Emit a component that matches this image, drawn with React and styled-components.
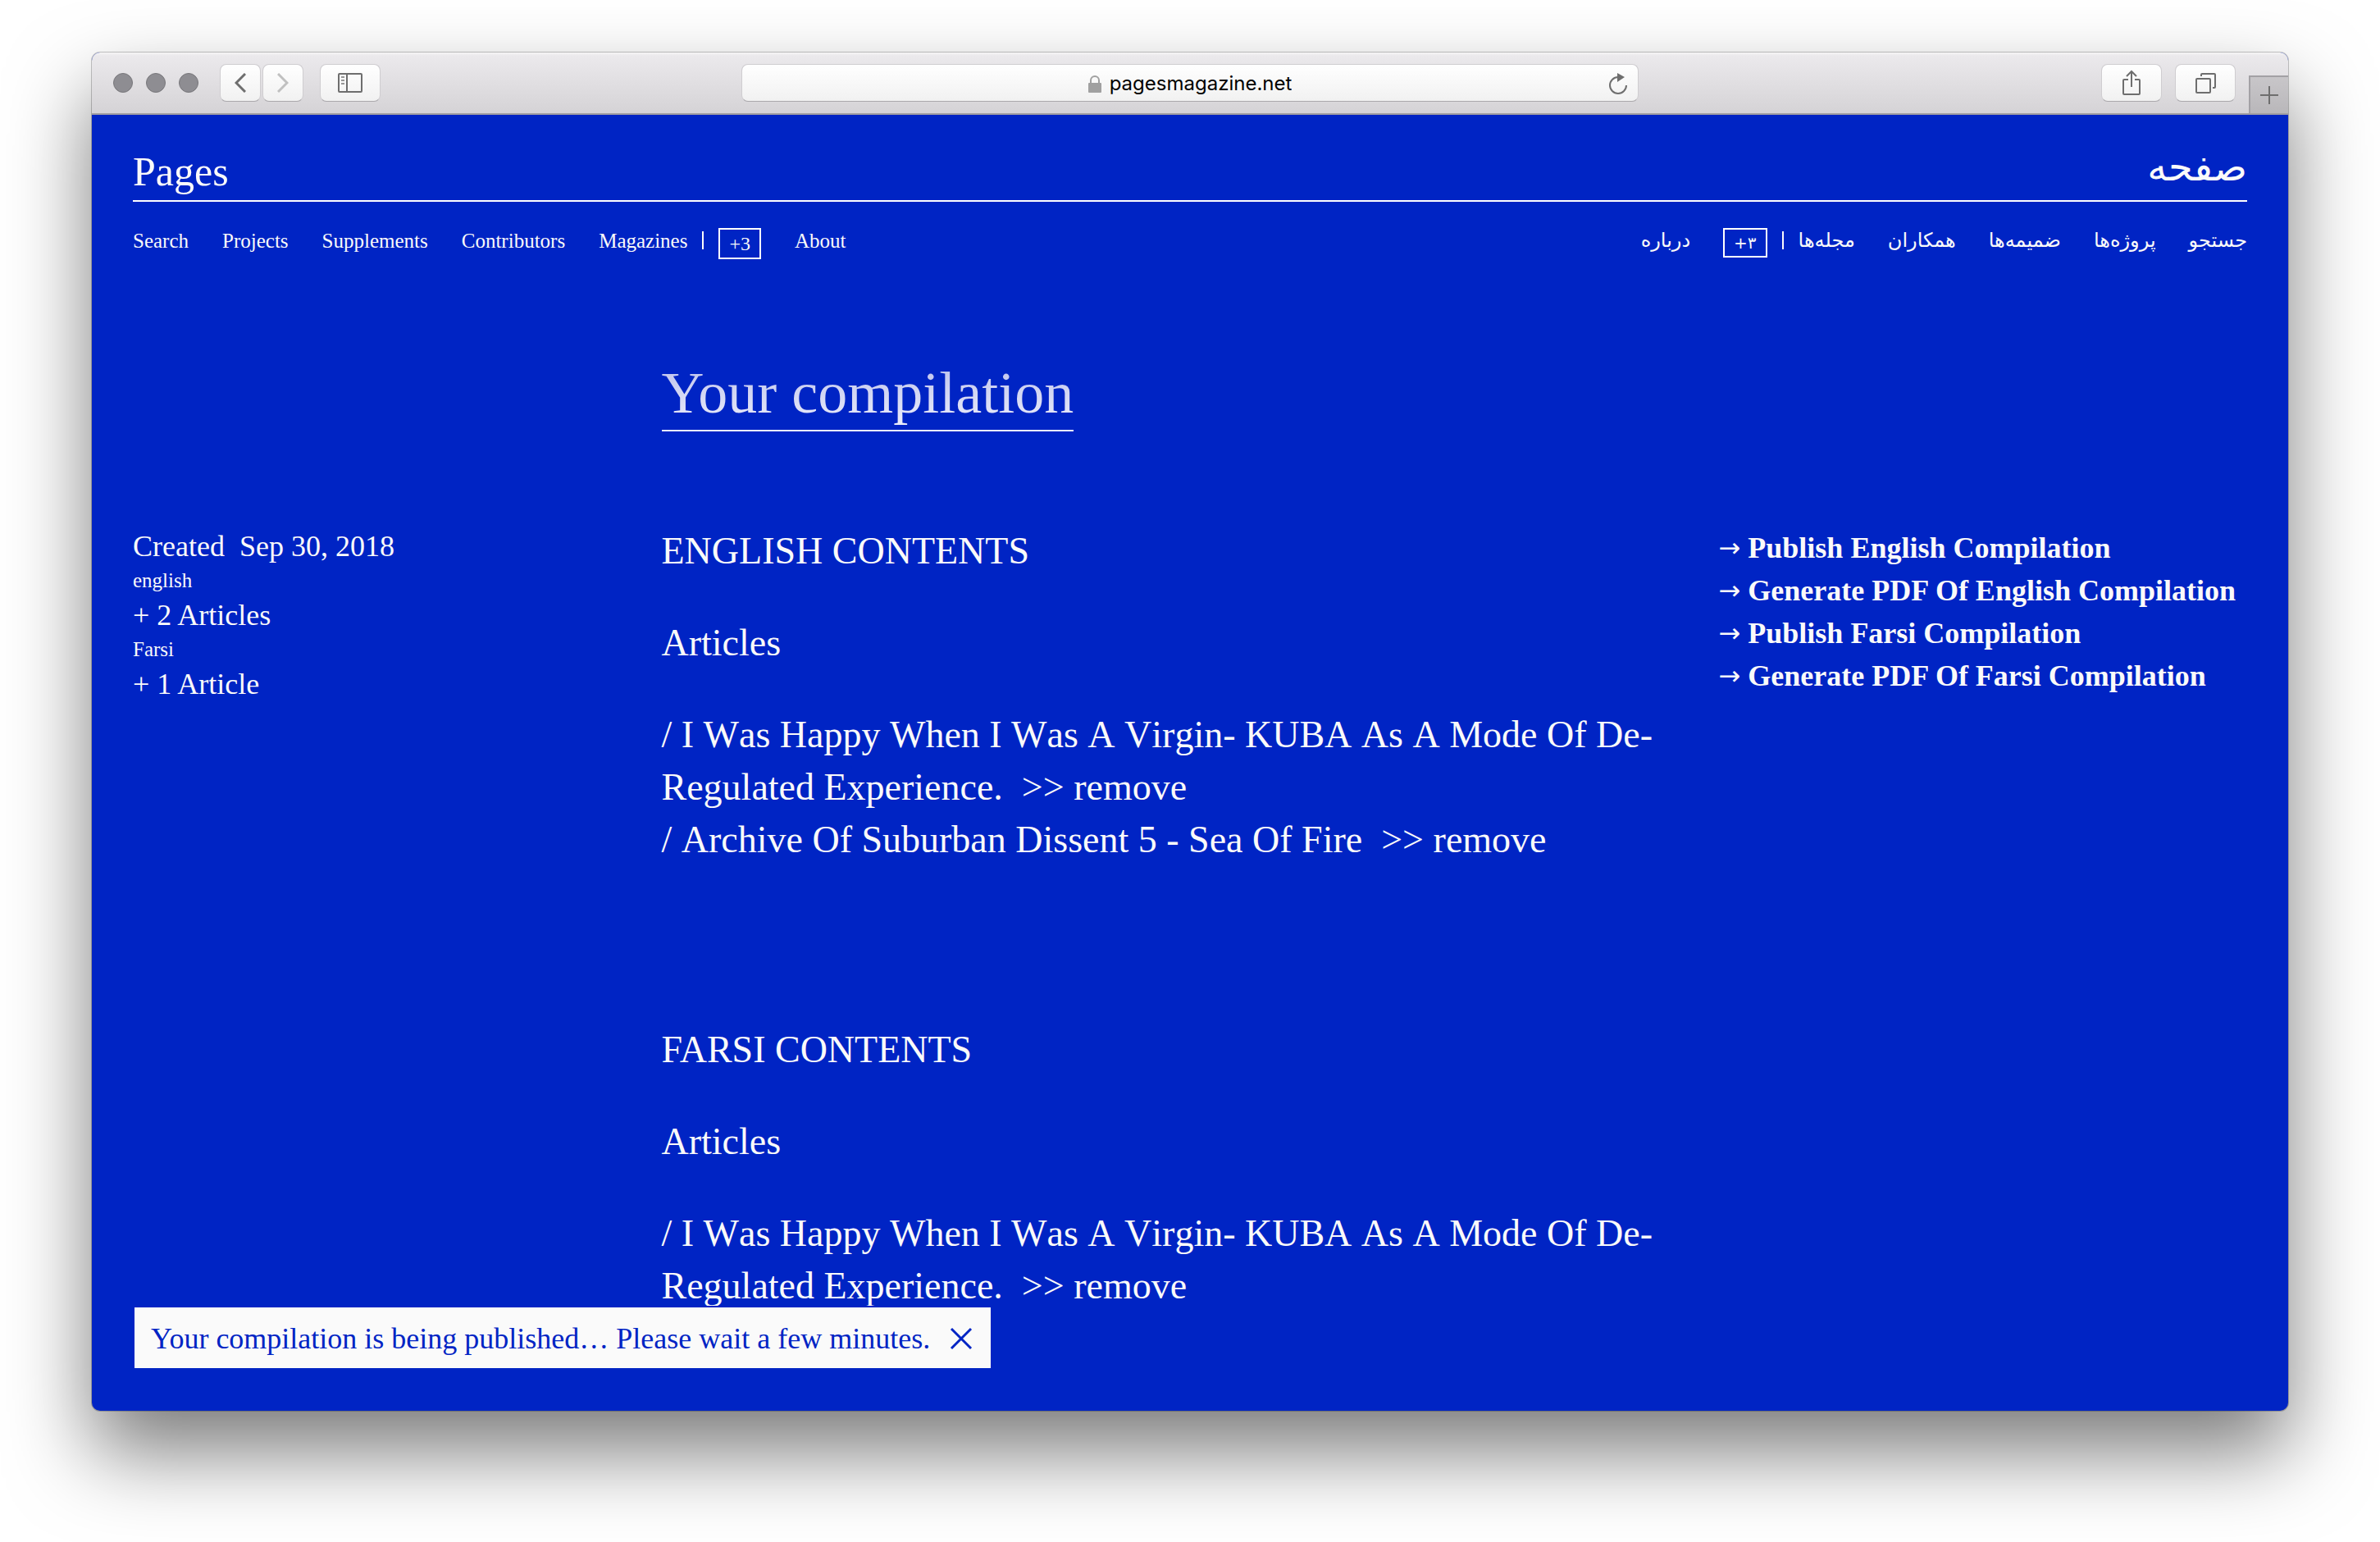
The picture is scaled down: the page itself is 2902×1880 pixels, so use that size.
import React, { useState } from "react";
import styled, { createGlobalStyle, css } from "styled-components";

const BLUE = "#0024c4";
const PAPER = "#fafafa";

const GlobalStyle = createGlobalStyle`
  *, *::before, *::after { box-sizing: border-box; }
  body {
    margin: 0;
    background: #fff;
    font-family: "Liberation Serif", serif;
  }
  h1, h2, h3, p, ul { margin: 0; padding: 0; font-weight: 400; }
  ul { list-style: none; }
  a { color: inherit; text-decoration: none; }
  button, input { font: inherit; color: inherit; margin: 0; }
`;

const Desktop = styled.div`
  display: flex;
  min-height: 100vh;
  padding: 64px 112px 160px;
`;

const Window = styled.div`
  position: relative;
  display: flex;
  flex-direction: column;
  flex: 1;
  min-width: 0;
  border-radius: 10px;
  overflow: hidden;
  background: ${BLUE};
  box-shadow: 0 0 0 1px rgba(0, 0, 0, 0.22), 0 50px 100px rgba(0, 0, 0, 0.52);
`;

const Toolbar = styled.div`
  display: grid;
  grid-template-columns: 1fr minmax(0, 1094px) 1fr;
  align-items: center;
  height: 76px;
  border-bottom: 2px solid #a09ea2;
  background: linear-gradient(#f6f5f6, #ebe9ec 4px, #d5d3d6);
  color: #6e6e6e;
`;

const ToolGroup = styled.div`
  display: flex;
  align-items: center;
  align-self: stretch;
  justify-content: ${(p) => (p.$end ? "flex-end" : "flex-start")};
  gap: ${(p) => (p.$end ? "16px" : "20px")};
  padding-left: ${(p) => (p.$end ? "0" : "26px")};
`;

const Lights = styled.div`
  display: flex;
  gap: 16px;
  padding-right: 6px;
`;

const Light = styled.span`
  width: 24px;
  height: 24px;
  border: 1px solid #78777b;
  border-radius: 50%;
  background: #8e8d92;
`;

const Pair = styled.div`
  display: flex;
  gap: 2px;
`;

const raised = css`
  border: 1px solid #cfcdd0;
  border-bottom-color: #aaa8ab;
  border-radius: 8px;
  background: linear-gradient(#fff, #f1f1f1);
`;

const ToolButton = styled.button`
  ${raised}
  display: grid;
  place-items: center;
  width: ${(p) => (p.$small ? "50px" : "74px")};
  height: 46px;
  padding: 0;
  color: ${(p) => (p.disabled ? "#c0c0c0" : "#6e6e6e")};
`;

const NewTab = styled.button`
  display: grid;
  place-items: center;
  align-self: flex-end;
  width: 48px;
  height: 46px;
  padding: 0;
  border: 0 solid #a3a1a5;
  border-width: 2px 0 0 2px;
  background: linear-gradient(#c8c6c9, #b9b7ba);
`;

const AddressBar = styled.div`
  ${raised}
  display: grid;
  grid-template-columns: 1fr auto 1fr;
  align-items: center;
  height: 46px;
  padding: 2px 13px 0;
`;

const AddressField = styled.label`
  display: flex;
  grid-column: 2;
  align-items: center;
  gap: 10px;
`;

const AddressInput = styled.input`
  field-sizing: content;
  padding: 0;
  border: 0;
  outline: 0;
  background: none;
  color: #000;
  font-family: Inter, sans-serif;
  font-size: 24px;
  line-height: 32px;
`;

const IconButton = styled.button`
  display: grid;
  place-items: center;
  justify-self: end;
  padding: 0;
  border: 0;
  background: none;
`;

const Site = styled.div`
  flex: 1;
  padding: 41px 50px 100px;
  color: ${PAPER};
`;

const Masthead = styled.header`
  display: flex;
  justify-content: space-between;
  padding-bottom: 7px;
  border-bottom: 2px solid #fff;
`;

const Brand = styled.a`
  font-size: 50px;
  line-height: 56px;
  ${(p) => p.$fa && css`
    font-family: "DejaVu Sans", sans-serif;
    font-size: 48px;
    line-height: 44px;
  `}
`;

const Menus = styled.div`
  display: flex;
  justify-content: space-between;
  height: 38px;
  margin-top: 32px;
`;

const Menu = styled.nav`
  display: flex;
  gap: 41px;
  font-size: 25px;
  line-height: 32px;
  ${(p) => p.$fa && css`
    gap: 40px;
    font-family: "DejaVu Sans", sans-serif;
    font-size: 24px;
    line-height: 30px;
  `}
`;

const MenuGroup = styled.span`
  display: flex;
  gap: 18px;
`;

const Bar = styled.span`
  width: 2px;
  height: 22px;
  margin-top: 4px;
  background: ${PAPER};
`;

const Count = styled.button`
  height: ${(p) => (p.$fa ? "36px" : "38px")};
  padding: 0 11px;
  border: 2px solid #fff;
  background: none;
  font-size: ${(p) => (p.$fa ? "20px" : "24px")};
  line-height: ${(p) => (p.$fa ? "32px" : "34px")};
`;

const Columns = styled.main`
  display: grid;
  grid-template-columns: 1fr 2fr 1fr;
`;

const TitleRow = styled.div`
  grid-column: 2 / 4;
  margin: 123px 0 114px;
`;

const Title = styled.h1`
  width: fit-content;
  padding-bottom: 5px;
  border-bottom: 2px solid #ebedfa;
  background: linear-gradient(#c0c5ee 10px, #ebedfa 80px);
  background-clip: text;
  color: transparent;
  font-size: 72px;
  line-height: 80px;
`;

const Details = styled.aside`
  grid-column: 1;
  padding-top: 5px;
  font-size: 36px;
  line-height: 42px;
`;

const Language = styled.p`
  font-size: 25px;
`;

const Contents = styled.div`
  display: grid;
  gap: 192px;
  padding-right: 20px;
  font-size: 46px;
  line-height: 64px;
`;

const Section = styled.section`
  display: grid;
  gap: 48px;
`;

const Heading = styled.h2`
  font-size: 46px;
`;

const SubHeading = styled.h3`
  font-size: 46px;
`;

const ArticleList = styled.ul`
  font-kerning: none;
`;

const Remove = styled.button`
  display: inline;
  padding: 0;
  border: 0;
  background: none;
  white-space: nowrap;
`;

const Actions = styled.ul`
  padding-top: 2px;
  font-size: 36px;
  line-height: 52px;
`;

const Action = styled.button`
  display: flex;
  gap: 9px;
  padding: 0;
  border: 0;
  background: none;
  font-weight: 700;
  white-space: nowrap;
`;

const Arrow = styled.span`
  font-family: "DejaVu Sans", sans-serif;
  font-size: 32px;
  font-weight: 400;
`;

const Notice = styled.div`
  position: absolute;
  bottom: 50px;
  left: 50px;
  display: flex;
  align-items: center;
  gap: 24px;
  padding: 18px 22px 16px 20px;
  border: 2px solid ${BLUE};
  background: ${PAPER};
  color: ${BLUE};
  font-size: 36px;
  line-height: 40px;
`;

const Icon = ({ w, h, sw = 2, children }) => (
  <svg width={w} height={h} viewBox={`0 0 ${w} ${h}`} fill="none" stroke="currentColor" strokeWidth={sw} aria-hidden="true">
    {children}
  </svg>
);

const VIRGIN = "I Was Happy When I Was A Virgin- KUBA As A Mode Of De-Regulated Experience.";
const SECTIONS = [
  { title: "ENGLISH CONTENTS", articles: [VIRGIN, "Archive Of Suburban Dissent 5 - Sea Of Fire"] },
  { title: "FARSI CONTENTS", articles: [VIRGIN] },
];
const ACTIONS = [
  "Publish English Compilation",
  "Generate PDF Of English Compilation",
  "Publish Farsi Compilation",
  "Generate PDF Of Farsi Compilation",
];
const MENUS = [
  { items: ["Search", "Projects", "Supplements", "Contributors"], magazines: "Magazines", count: "+3", about: "About" },
  { fa: true, items: ["جستجو", "پروژه‌ها", "ضمیمه‌ها", "همکاران"], magazines: "مجله‌ها", count: "۳+", about: "درباره" },
];

function BrowserToolbar() {
  return (
    <Toolbar>
      <ToolGroup>
        <Lights><Light /><Light /><Light /></Lights>
        <Pair>
          <ToolButton $small aria-label="Back">
            <Icon w={14} h={24} sw={3}><path d="M13 1 2 12l11 11" /></Icon>
          </ToolButton>
          <ToolButton $small disabled aria-label="Forward">
            <Icon w={14} h={24} sw={3}><path d="m1 1 11 11L1 23" /></Icon>
          </ToolButton>
        </Pair>
        <ToolButton aria-label="Sidebar">
          <Icon w={30} h={24}>
            <rect x="1" y="1" width="28" height="22" rx="1" />
            <path d="M11 1v22" />
            <path d="M4 5h4M4 9h4M4 13h4" opacity=".7" />
          </Icon>
        </ToolButton>
      </ToolGroup>
      <AddressBar>
        <AddressField>
          <svg width="16" height="21" viewBox="0 0 16 21" aria-hidden="true">
            <path d="M3 10V6a5 5 0 0 1 10 0v4" fill="none" stroke="#a0a0a0" strokeWidth="2" />
            <rect y="9" width="16" height="12" rx="1" fill="#a0a0a0" />
          </svg>
          <AddressInput aria-label="Address" defaultValue="pagesmagazine.net" />
        </AddressField>
        <IconButton aria-label="Reload">
          <Icon w={22} h={26}>
            <path d="M11 5a10 10 0 1 0 10 10" />
            <path d="m10 0 9 5-9 6z" fill="currentColor" stroke="none" />
          </Icon>
        </IconButton>
      </AddressBar>
      <ToolGroup $end>
        <ToolButton aria-label="Share">
          <Icon w={24} h={32}>
            <path d="M8 12H3q-1 0-1 1v16q0 1 1 1h18q1 0 1-1V13q0-1-1-1h-5M12 21V3M6 8l6-6 6 6" />
          </Icon>
        </ToolButton>
        <ToolButton aria-label="Tabs">
          <Icon w={26} h={26}>
            <rect x="2" y="8" width="17" height="17" rx="1" />
            <path d="M8 5V3q0-1 1-1h15q1 0 1 1v15q0 1-1 1h-2" />
          </Icon>
        </ToolButton>
        <NewTab aria-label="New tab">
          <Icon w={22} h={22}><path d="M11 0v22M0 11h22" /></Icon>
        </NewTab>
      </ToolGroup>
    </Toolbar>
  );
}

export default function App() {
  const [notice, setNotice] = useState(true);
  return (
    <>
      <GlobalStyle />
      <Desktop>
        <Window>
          <BrowserToolbar />
          <Site>
            <Masthead>
              <Brand href="#">Pages</Brand>
              <Brand href="#" $fa dir="rtl" lang="fa">صفحه</Brand>
            </Masthead>
            <Menus>
              {MENUS.map((m) => (
                <Menu key={m.about} $fa={m.fa} dir={m.fa ? "rtl" : "ltr"} lang={m.fa ? "fa" : "en"}>
                  {m.items.map((t) => <a key={t} href="#">{t}</a>)}
                  <MenuGroup>
                    <a href="#">{m.magazines}</a>
                    <Bar />
                    <Count $fa={m.fa}>{m.count}</Count>
                  </MenuGroup>
                  <a href="#">{m.about}</a>
                </Menu>
              ))}
            </Menus>
            <Columns>
              <TitleRow><Title>Your compilation</Title></TitleRow>
              <Details>
                <p>Created&nbsp; Sep 30, 2018</p>
                <Language>english</Language>
                <p>+ 2 Articles</p>
                <Language>Farsi</Language>
                <p>+ 1 Article</p>
              </Details>
              <Contents>
                {SECTIONS.map((s) => (
                  <Section key={s.title}>
                    <Heading>{s.title}</Heading>
                    <SubHeading>Articles</SubHeading>
                    <ArticleList>
                      {s.articles.map((a) => (
                        <li key={a}>
                          <a href="#">/ {a}</a>&nbsp; <Remove>&gt;&gt; remove</Remove>
                        </li>
                      ))}
                    </ArticleList>
                  </Section>
                ))}
              </Contents>
              <Actions>
                {ACTIONS.map((a) => (
                  <li key={a}><Action><Arrow>→</Arrow>{a}</Action></li>
                ))}
              </Actions>
            </Columns>
          </Site>
          {notice && (
            <Notice role="status">
              Your compilation is being published… Please wait a few minutes.
              <IconButton aria-label="Close" onClick={() => setNotice(false)}>
                <Icon w={28} h={28} sw={3}><path d="m2 2 24 24M26 2 2 26" /></Icon>
              </IconButton>
            </Notice>
          )}
        </Window>
      </Desktop>
    </>
  );
}
